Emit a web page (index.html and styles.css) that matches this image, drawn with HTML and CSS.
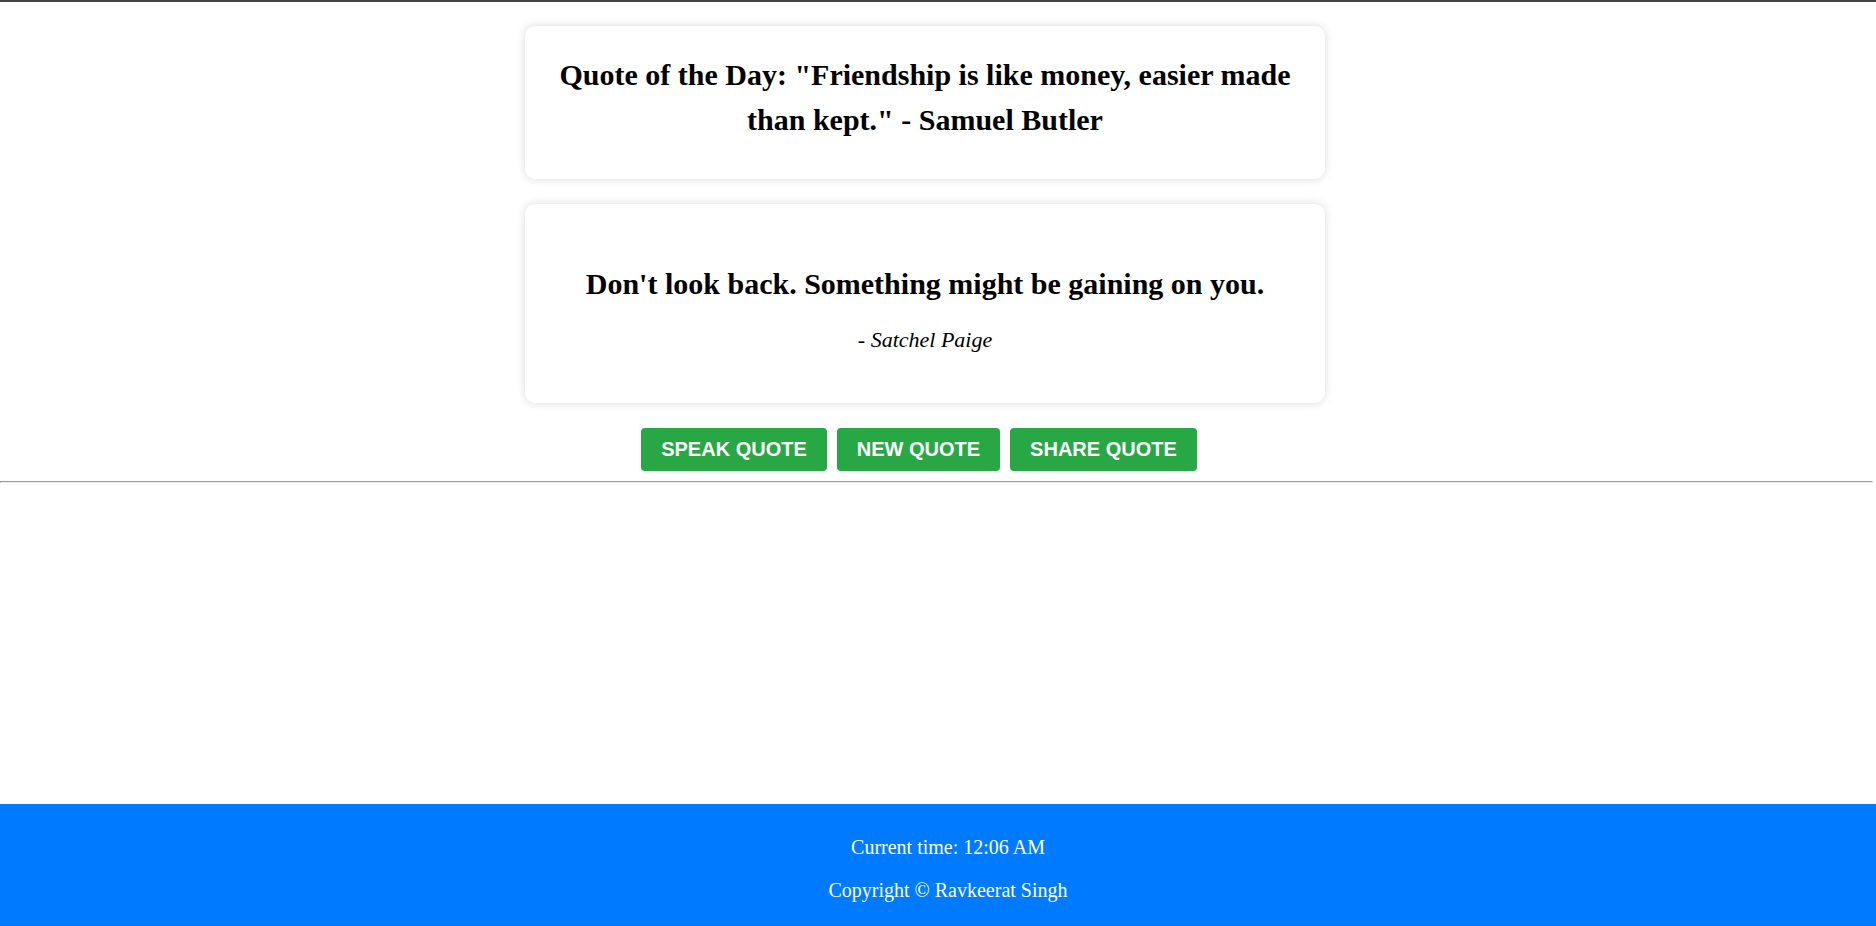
FILE: index.html
```html
<!DOCTYPE html>
<html lang="en">
<head>
<meta charset="utf-8">
<title>Quote Generator</title>
<link rel="stylesheet" href="styles.css">
</head>
<body>
<div class="page">
  <div class="topline"></div>
  <main class="main">
    <section class="card card-day">
      <h2 class="day-quote">Quote of the Day: "Friendship is like money, easier made than kept." - Samuel Butler</h2>
    </section>
    <section class="card card-quote">
      <p class="quote-text">Don't look back. Something might be gaining on you.</p>
      <p class="quote-author">- <em>Satchel Paige</em></p>
    </section>
    <div class="buttons">
      <button class="btn">SPEAK QUOTE</button>
      <button class="btn">NEW QUOTE</button>
      <button class="btn">SHARE QUOTE</button>
    </div>
  </main>
  <hr class="divider">
  <footer class="footer">
    <p class="footer-line">Current time: 12:06 AM</p>
    <p class="footer-line">Copyright © Ravkeerat Singh</p>
  </footer>
</div>
</body>
</html>
```
FILE: styles.css
```css
html, body {
  margin: 0;
  padding: 0;
  background: #fff;
}
body {
  font-family: "Liberation Serif", "Times New Roman", serif;
  color: #000;
}
.page {
  min-height: 100vh;
  display: flex;
  flex-direction: column;
}
.topline {
  height: 2px;
  background: #444;
}
.main {
  display: flex;
  flex-direction: column;
  align-items: center;
  gap: 25px;
  padding-top: 24px;
}
.card {
  width: 800px;
  box-sizing: border-box;
  margin-right: 26px;
  background: #fff;
  border-radius: 10px;
  box-shadow: 0 0 10px rgba(0, 0, 0, 0.15);
  text-align: center;
}
.card-day {
  padding: 26px 20px 37px;
}
.day-quote {
  margin: 0;
  font-size: 30px;
  font-weight: bold;
  line-height: 45px;
}
.card-quote {
  padding: 57px 20px 47px;
}
.quote-text {
  margin: 0 0 18px;
  font-size: 30px;
  font-weight: bold;
  line-height: 45px;
}
.quote-author {
  margin: 0;
  font-size: 22px;
  line-height: 32px;
}
.buttons {
  display: flex;
  gap: 10px;
  margin-right: 38px;
}
.btn {
  font-family: "Liberation Sans", Arial, sans-serif;
  font-size: 20px;
  font-weight: bold;
  color: #fff;
  background: #28a745;
  border: none;
  border-radius: 4px;
  padding: 10px 20px;
  line-height: 23px;
}
.divider {
  margin: 10px 3px 0 0;
  border: 1px inset;
  color: gray;
}
.footer {
  margin-top: auto;
  background: #007bff;
  color: #fff;
  text-align: center;
  padding: 12px 0 4px 20px;
}
.footer-line {
  margin: 20px 0;
  font-size: 20px;
  line-height: 23px;
}
```
